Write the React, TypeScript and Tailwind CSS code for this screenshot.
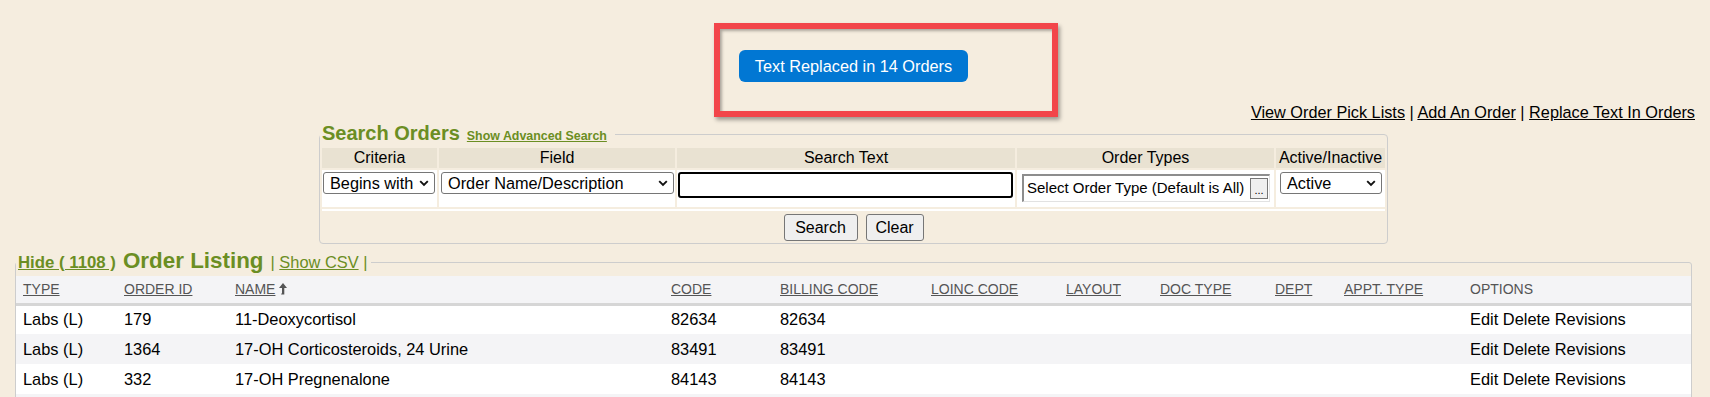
const rows = [
  { type: "Labs (L)", id: "179", name: "11-Deoxycortisol", code: "82634", billing: "82634" },
  { type: "Labs (L)", id: "1364", name: "17-OH Corticosteroids, 24 Urine", code: "83491", billing: "83491" },
  { type: "Labs (L)", id: "332", name: "17-OH Pregnenalone", code: "84143", billing: "84143" },
];

const Chevron = () => (
  <svg width="10" height="7" viewBox="0 0 10 7" className="shrink-0">
    <path d="M1.2 1.2 5 5 8.8 1.2" fill="none" stroke="#111" strokeWidth="1.9" />
  </svg>
);

const FakeSelect = ({ value, className }: { value: string; className: string }) => (
  <div
    className={`flex h-[22px] items-center justify-between rounded-[3px] border border-[#767676] bg-white pl-[6px] pr-[5px] text-[16.3px] leading-[18px] ${className}`}
  >
    <span className="whitespace-nowrap">{value}</span>
    <Chevron />
  </div>
);

const SortUp = () => (
  <svg width="8" height="12" viewBox="0 0 8 12" className="ml-[4px] inline-block align-[-1px]">
    <path d="M4 0 8 5H5.3V11.5H2.2V10.4H3V5H0Z" fill="#555" />
  </svg>
);

const App = () => {
  return (
    <div className="min-h-screen bg-[#f5eddf] font-['Liberation_Sans',Arial,sans-serif] text-black">
      <div className="w-[1707px]">
        {/* Notice */}
        <div className="flex justify-center pt-[50px]">
          <div className="relative">
            <button className="h-[32px] rounded-[6px] bg-[#0177d3] px-[16px] text-[16.3px] leading-[32px] text-white">
              Text Replaced in 14 Orders
            </button>
            <div className="pointer-events-none absolute -left-[25px] -top-[27px] h-[94px] w-[344px] border-[6px] border-[#f2454a] shadow-[2px_3px_4px_rgba(0,0,0,0.35),inset_2px_2px_3px_rgba(0,0,0,0.3)]" />
          </div>
        </div>

        {/* Top links */}
        <div className="mt-[21px] pr-[12px] text-right text-[16.25px] leading-[18px]">
          <a className="underline">View Order Pick Lists</a> | <a className="underline">Add An Order</a> |{" "}
          <a className="underline">Replace Text In Orders</a>
        </div>

        {/* Search Orders */}
        <fieldset className="mx-auto mt-px w-[1069px] rounded-[4px] border border-[#cdcdcd]">
          <legend className="pl-[2px] pr-[8px] leading-[23px] text-[#6b8e23]">
            <span className="text-[20px] font-bold">Search Orders</span>
            <a className="ml-[7px] text-[12.4px] font-bold leading-none underline">Show Advanced Search</a>
          </legend>
          <table className="w-full table-fixed border-separate border-spacing-[2px] text-[16px]">
            <colgroup>
              <col className="w-[115px]" />
              <col className="w-[236px]" />
              <col className="w-[338px]" />
              <col className="w-[257px]" />
              <col className="w-[109px]" />
            </colgroup>
            <tbody>
              <tr className="h-[20px] bg-[#e9e2d2] text-center leading-[20px]">
                <td className="p-0">Criteria</td>
                <td className="p-0">Field</td>
                <td className="p-0">Search Text</td>
                <td className="p-0">Order Types</td>
                <td className="p-0 whitespace-nowrap">Active/Inactive</td>
              </tr>
              <tr className="h-[37px] bg-white align-top">
                <td className="p-0 pt-[2px] pl-px">
                  <FakeSelect value="Begins with" className="w-[112px]" />
                </td>
                <td className="p-0 pt-[2px] pl-[2px]">
                  <FakeSelect value="Order Name/Description" className="w-[233px]" />
                </td>
                <td className="p-0 pt-[2px] pl-px">
                  <input className="h-[26px] w-[335px] rounded-[3px] border-2 border-black bg-white px-[3px] outline-none" />
                </td>
                <td className="p-0 pt-[4px] pl-[5px]">
                  <div className="flex h-[28px] w-[248px] items-center border-t-2 border-l-2 border-r border-b border-t-[#8d8d8d] border-l-[#8d8d8d] border-r-[#e2e2e2] border-b-[#e2e2e2] bg-white pl-[3px] text-[15px]">
                    <span className="whitespace-nowrap">Select Order Type (Default is All)</span>
                    <button className="ml-auto mr-px flex h-[21px] w-[18px] items-end justify-center border border-[#767676] bg-[#efefef] pb-[2px] text-[11px] leading-none">
                      ...
                    </button>
                  </div>
                </td>
                <td className="p-0 pt-[2px] pl-[4px]">
                  <FakeSelect value="Active" className="w-[102px]" />
                </td>
              </tr>
              <tr>
                <td colSpan={5} className="h-[2px] bg-white p-0 text-[0px] leading-none" />
              </tr>
              <tr className="h-[28px] align-top">
                <td colSpan={5} className="p-0 pt-px">
                  <div className="flex justify-center gap-[8px]">
                    <button className="h-[27px] w-[74px] rounded-[3px] border border-[#767676] bg-[#efefef] text-[16px]">
                      Search
                    </button>
                    <button className="h-[27px] w-[58px] rounded-[3px] border border-[#767676] bg-[#efefef] text-[16px]">
                      Clear
                    </button>
                  </div>
                </td>
              </tr>
            </tbody>
          </table>
        </fieldset>

        {/* Order Listing */}
        <fieldset className="mx-[15px] mt-[4px] rounded-[3px] border border-[#cdcdcd]">
          <legend className="pl-[2px] pr-[4px] leading-[26px] text-[#6b8e23]">
            <a className="text-[16.8px] font-bold leading-none underline">Hide ( 1108 )</a>
            <span className="ml-[7px] text-[22.4px] font-bold">Order Listing</span>
            <span className="ml-[7px] text-[16.4px] leading-none">
              | <a className="underline">Show CSV</a> |
            </span>
          </legend>
          <table className="w-full table-fixed border-collapse text-[16.4px]">
            <colgroup>
              <col className="w-[101px]" />
              <col className="w-[111px]" />
              <col className="w-[436px]" />
              <col className="w-[109px]" />
              <col className="w-[151px]" />
              <col className="w-[135px]" />
              <col className="w-[94px]" />
              <col className="w-[115px]" />
              <col className="w-[69px]" />
              <col className="w-[126px]" />
              <col className="w-[228px]" />
            </colgroup>
            <thead>
              <tr className="h-[28px] border-b-[3px] border-[#d6d6d6] bg-[#f4f4f6] text-left text-[14px] font-normal text-[#555]">
                <th className="p-0 pl-[7px] font-normal"><a className="underline">TYPE</a></th>
                <th className="p-0 pl-[7px] font-normal"><a className="underline">ORDER ID</a></th>
                <th className="p-0 pl-[7px] font-normal">
                  <a className="underline">NAME</a>
                  <SortUp />
                </th>
                <th className="p-0 pl-[7px] font-normal"><a className="underline">CODE</a></th>
                <th className="p-0 pl-[7px] font-normal"><a className="underline">BILLING CODE</a></th>
                <th className="p-0 pl-[7px] font-normal"><a className="underline">LOINC CODE</a></th>
                <th className="p-0 pl-[7px] font-normal"><a className="underline">LAYOUT</a></th>
                <th className="p-0 pl-[7px] font-normal"><a className="underline">DOC TYPE</a></th>
                <th className="p-0 pl-[7px] font-normal"><a className="underline">DEPT</a></th>
                <th className="p-0 pl-[7px] font-normal whitespace-nowrap"><a className="underline">APPT. TYPE</a></th>
                <th className="p-0 pl-[7px] font-normal">OPTIONS</th>
              </tr>
            </thead>
            <tbody>
              {rows.map((row, i) => (
                <tr key={row.id} className={`h-[30px] ${i % 2 === 1 ? "bg-[#f4f4f6]" : "bg-white"}`}>
                  <td className="p-0 pl-[7px]">{row.type}</td>
                  <td className="p-0 pl-[7px]">{row.id}</td>
                  <td className="p-0 pl-[7px]">{row.name}</td>
                  <td className="p-0 pl-[7px]">{row.code}</td>
                  <td className="p-0 pl-[7px]">{row.billing}</td>
                  <td className="p-0 pl-[7px]" />
                  <td className="p-0 pl-[7px]" />
                  <td className="p-0 pl-[7px]" />
                  <td className="p-0 pl-[7px]" />
                  <td className="p-0 pl-[7px]" />
                  <td className="p-0 pl-[7px] whitespace-nowrap">
                    <a>Edit</a> <a>Delete</a> <a>Revisions</a>
                  </td>
                </tr>
              ))}
              <tr className="h-[30px] bg-[#f4f4f6]">
                <td colSpan={11} className="p-0" />
              </tr>
            </tbody>
          </table>
        </fieldset>
      </div>
    </div>
  );
};

export default App;
